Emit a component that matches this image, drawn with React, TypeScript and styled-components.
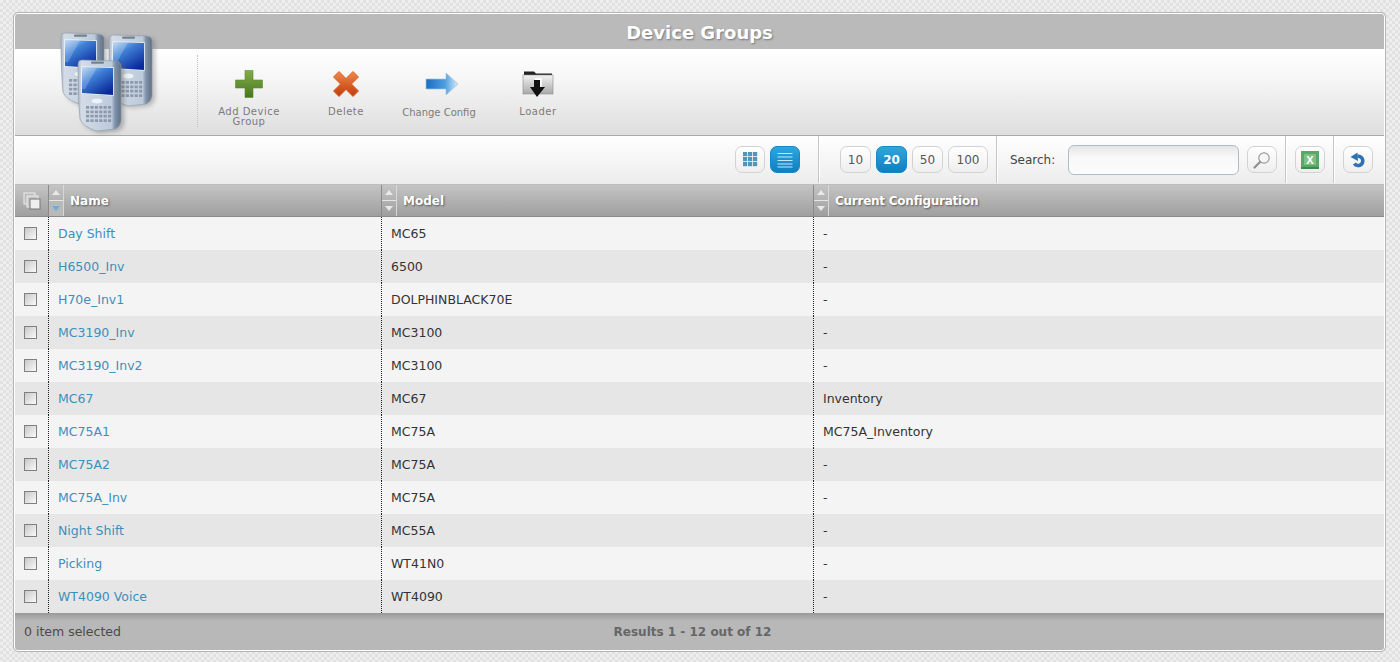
import React from 'react';
import styled, { createGlobalStyle } from 'styled-components';

const GlobalStyle = createGlobalStyle`
  html, body { margin: 0; padding: 0; height: 100%; }
  body {
    font-family: "DejaVu Sans", Verdana, sans-serif;
    background-color: #e9e9e9;
    background-image: conic-gradient(#e1e1e1 25%, #eeeeee 0 50%, #e1e1e1 0 75%, #eeeeee 0);
    background-size: 6px 6px;
    overflow: hidden;
  }
`;

const rows = [
  { name: 'Day Shift', model: 'MC65', config: '-' },
  { name: 'H6500_Inv', model: '6500', config: '-' },
  { name: 'H70e_Inv1', model: 'DOLPHINBLACK70E', config: '-' },
  { name: 'MC3190_Inv', model: 'MC3100', config: '-' },
  { name: 'MC3190_Inv2', model: 'MC3100', config: '-' },
  { name: 'MC67', model: 'MC67', config: 'Inventory' },
  { name: 'MC75A1', model: 'MC75A', config: 'MC75A_Inventory' },
  { name: 'MC75A2', model: 'MC75A', config: '-' },
  { name: 'MC75A_Inv', model: 'MC75A', config: '-' },
  { name: 'Night Shift', model: 'MC55A', config: '-' },
  { name: 'Picking', model: 'WT41N0', config: '-' },
  { name: 'WT4090 Voice', model: 'WT4090', config: '-' },
];

const PhoneIcon = ({ id }: { id: string }) => (
  <svg width="54" height="74" viewBox="0 0 54 74">
    <defs>
      <linearGradient id={`${id}-body`} x1="0" x2="1" y1="0" y2="0">
        <stop offset="0" stopColor="#a9b5c3" />
        <stop offset="0.08" stopColor="#d3dce6" />
        <stop offset="0.78" stopColor="#bccadb" />
        <stop offset="0.86" stopColor="#7f92a8" />
        <stop offset="1" stopColor="#5f7185" />
      </linearGradient>
      <linearGradient id={`${id}-screen`} x1="0" x2="0.7" y1="0" y2="1">
        <stop offset="0" stopColor="#b4d4f0" />
        <stop offset="0.4" stopColor="#3f80d6" />
        <stop offset="1" stopColor="#0b2a9a" />
      </linearGradient>
    </defs>
    <path d="M1 5 Q1 1 5 1 L37 2 Q43 2 44 6 L44 62 Q43 68 38 70 L20 72 Q6 68 3 60 Q1 40 1 5Z" fill={`url(#${id}-body)`} stroke="#8d9bab" strokeWidth="0.6" />
    <rect x="14" y="2.5" width="13" height="2.2" rx="1" fill="#76818e" />
    <path d="M5 8 L36 9 L36 36 L5 34Z" fill="#eef3f8" stroke="#eef3f8" strokeWidth="1.4" />
    <path d="M5 8 L36 9 L36 36 L5 34Z" fill={`url(#${id}-screen)`} />
    <path d="M5 8 L20 8.5 L8 30 L5 30Z" fill="#fff" opacity="0.2" />
    <ellipse cx="20" cy="42" rx="5.5" ry="2.4" fill="#eef2f7" />
    <g fill="#8b9aac">
      {Array.from({ length: 24 }).map((_, i) => (
        <rect key={i} x={9 + (i % 6) * 4.4} y={47 + Math.floor(i / 6) * 4.4} width="3.2" height="2.8" rx="0.5" />
      ))}
    </g>
  </svg>
);

const PlusIcon = () => (
  <svg width="30" height="30" viewBox="0 0 30 30">
    <defs>
      <linearGradient id="plus-fill" x1="0" x2="0" y1="0" y2="1">
        <stop offset="0" stopColor="#83ad4a" />
        <stop offset="1" stopColor="#47761f" />
      </linearGradient>
    </defs>
    <path d="M11 1.5 H19 V11 H28.5 V19 H19 V28.5 H11 V19 H1.5 V11 H11Z" fill="url(#plus-fill)" stroke="#5d8a30" strokeWidth="0.6" />
  </svg>
);

const CrossIcon = () => (
  <svg width="28" height="28" viewBox="0 0 28 28">
    <defs>
      <linearGradient id="cross-fill" x1="0" x2="0" y1="0" y2="1">
        <stop offset="0" stopColor="#ef8a4a" />
        <stop offset="1" stopColor="#bf3a0a" />
      </linearGradient>
    </defs>
    <path d="M7 1.5 L14 8.5 L21 1.5 L26.5 7 L19.5 14 L26.5 21 L21 26.5 L14 19.5 L7 26.5 L1.5 21 L8.5 14 L1.5 7Z" fill="url(#cross-fill)" strokeLinejoin="round" stroke="#d8622a" strokeWidth="1" />
  </svg>
);

const ArrowIcon = () => (
  <svg width="34" height="24" viewBox="0 0 34 24">
    <defs>
      <linearGradient id="arrow-fill" x1="0" x2="1" y1="0" y2="0">
        <stop offset="0" stopColor="#1a6cc0" />
        <stop offset="0.6" stopColor="#4f9fe0" />
        <stop offset="1" stopColor="#d8ecfa" />
      </linearGradient>
    </defs>
    <path d="M1 7 H21 V1 L33 12 L21 23 V17 H1Z" fill="url(#arrow-fill)" stroke="#9ac6e8" strokeWidth="0.7" />
  </svg>
);

const LoaderIcon = () => (
  <svg width="32" height="28" viewBox="0 0 32 28">
    <defs>
      <linearGradient id="folder-fill" x1="0" x2="0" y1="0" y2="1">
        <stop offset="0" stopColor="#f2f2f2" />
        <stop offset="1" stopColor="#a9a9a9" />
      </linearGradient>
    </defs>
    <path d="M2 1.5 H12 L14 3.5 H30 V6 H2Z" fill="#222" />
    <rect x="1" y="5" width="30" height="19" fill="url(#folder-fill)" stroke="#8c8c8c" strokeWidth="0.6" />
    <rect x="13" y="8" width="7" height="9" fill="#fff" opacity="0.85" />
    <path d="M12 10 H18 V17 H23 L15 27 L8 17 H12Z" fill="#111" />
  </svg>
);

const GridIcon = () => (
  <svg width="15" height="15" viewBox="0 0 15 15" fill="#4f97b8">
    {Array.from({ length: 9 }).map((_, i) => (
      <rect key={i} x={(i % 3) * 5} y={Math.floor(i / 3) * 5} width="4.2" height="4.2" />
    ))}
  </svg>
);

const ListIcon = () => (
  <svg width="16" height="16" viewBox="0 0 16 16" stroke="#bfeaf8" strokeWidth="1">
    {[1.5, 5, 8.5, 12, 15].map((y) => (
      <line key={y} x1="0.5" x2="15.5" y1={y} y2={y} />
    ))}
  </svg>
);

const SearchIcon = () => (
  <svg width="18" height="18" viewBox="0 0 18 18" fill="none">
    <circle cx="11" cy="7" r="5.2" fill="#f4f7fa" stroke="#9a9a9a" strokeWidth="1.2" />
    <path d="M7 11 L1.5 16.5" stroke="#8f8f8f" strokeWidth="2.2" strokeLinecap="round" />
  </svg>
);

const ExcelIcon = () => (
  <svg width="20" height="20" viewBox="0 0 20 20">
    <rect x="1" y="1" width="18" height="18" fill="#5aa868" />
    <rect x="1" y="17" width="18" height="2" fill="#3f8a4d" />
    <rect x="4" y="4" width="12" height="11" fill="#7ebf88" />
    <text x="10" y="13.5" textAnchor="middle" fontSize="11" fontWeight="700" fill="#fff" fontFamily="Liberation Sans, sans-serif">X</text>
  </svg>
);

const RefreshIcon = () => (
  <svg width="16" height="16" viewBox="0 0 16 16" fill="none">
    <path d="M7.5 4.4 A4.6 4.6 0 1 1 4.4 11.5" stroke="#2f72b4" strokeWidth="3.6" />
    <path d="M0.5 5 L7.5 0.5 L8 9Z" fill="#2f72b4" />
  </svg>
);

const SortButtons = ({ active }: { active?: boolean }) => (
  <SortStack>
    <SortCell>
      <svg width="8" height="5" viewBox="0 0 8 5"><path d="M0 5 L4 0 L8 5Z" fill="#e8e8e8" /></svg>
    </SortCell>
    <SortCell $active={active}>
      <svg width="8" height="5" viewBox="0 0 8 5"><path d="M0 0 L4 5 L8 0Z" fill={active ? '#63b4dc' : '#e8e8e8'} /></svg>
    </SortCell>
  </SortStack>
);

export default function App() {
  return (
    <>
      <GlobalStyle />
      <Panel>
        <TitleBar>Device Groups</TitleBar>
        <Logo>
          <BackPhoneLeft><PhoneIcon id="p1" /></BackPhoneLeft>
          <BackPhoneRight><PhoneIcon id="p2" /></BackPhoneRight>
          <FrontPhone><PhoneIcon id="p3" /></FrontPhone>
        </Logo>
        <ActionBar>
          <LogoCell />
          <Action $width={102}>
            <ActionIcon><PlusIcon /></ActionIcon>
            <ActionLabel>Add Device<br />Group</ActionLabel>
          </Action>
          <Action $width={92}>
            <ActionIcon><CrossIcon /></ActionIcon>
            <ActionLabel>Delete</ActionLabel>
          </Action>
          <Action $width={94}>
            <ActionIcon $shift={6}><ArrowIcon /></ActionIcon>
            <ActionLabel $tight>Change Config</ActionLabel>
          </Action>
          <Action $width={104}>
            <ActionIcon><LoaderIcon /></ActionIcon>
            <ActionLabel>Loader</ActionLabel>
          </Action>
        </ActionBar>
        <ViewBar>
          <BtnGroup>
            <SquareBtn><GridIcon /></SquareBtn>
            <SquareBtn $active><ListIcon /></SquareBtn>
          </BtnGroup>
          <BarSep $left={18} $right={21} />
          <BtnGroup>
            <PageBtn>10</PageBtn>
            <PageBtn $active>20</PageBtn>
            <PageBtn>50</PageBtn>
            <PageBtn $wide>100</PageBtn>
          </BtnGroup>
          <BarSep $left={8} $right={13} />
          <SearchLabel>Search:</SearchLabel>
          <SearchInput aria-label="Search" />
          <SquareBtn $ml={8}><SearchIcon /></SquareBtn>
          <BarSep $left={8} $right={9} />
          <SquareBtn><ExcelIcon /></SquareBtn>
          <BarSep $left={8} $right={9} />
          <SquareBtn><RefreshIcon /></SquareBtn>
        </ViewBar>
        <HeaderRow>
          <HeadCheck>
            <svg width="18" height="18" viewBox="0 0 18 18">
              <rect x="1" y="1" width="11" height="11" fill="#bbb" stroke="#eee" />
              <rect x="4" y="4" width="11" height="11" fill="#c6c6c6" stroke="#eee" />
              <rect x="7" y="7" width="10" height="10" fill="#efefef" stroke="#777" />
            </svg>
          </HeadCheck>
          <HeadCell><SortButtons active /><HeadText>Name</HeadText></HeadCell>
          <HeadCell><SortButtons /><HeadText>Model</HeadText></HeadCell>
          <HeadCell><SortButtons /><HeadText $tight>Current Configuration</HeadText></HeadCell>
        </HeaderRow>
        <div>
          {rows.map((row, i) => (
            <Row key={row.name} $alt={i % 2 === 1}>
              <CheckCell><CheckBox /></CheckCell>
              <Cell><NameLink>{row.name}</NameLink></Cell>
              <Cell>{row.model}</Cell>
              <Cell>{row.config}</Cell>
            </Row>
          ))}
        </div>
        <Footer>
          <span>0 item selected</span>
          <Results>Results 1 - 12 out of 12</Results>
          <span />
        </Footer>
      </Panel>
    </>
  );
}

const COLUMNS = '33px 333px 432px 1fr';

const Panel = styled.div`
  position: relative;
  box-sizing: border-box;
  width: 1371px;
  height: 638px;
  margin: 13px 0 0 14px;
  border: 1px solid #fff;
  border-radius: 4px;
  box-shadow: 0 0 0 1px #b5b5b5;
  background: #f3f3f3;
  overflow: hidden;
`;

const TitleBar = styled.div`
  height: 35px;
  line-height: 37px;
  background: #bababa;
  color: #fff;
  font-size: 18px;
  font-weight: 700;
  text-align: center;
  text-shadow: 1px 1px 2px #777;
`;

const Logo = styled.div`
  position: absolute;
  left: 44px;
  top: 17px;
  width: 110px;
  height: 100px;
`;

const BackPhoneLeft = styled.div`
  position: absolute;
  left: 1px;
  top: 1px;
  filter: drop-shadow(3px 2px 2px rgba(90, 90, 90, 0.35));
`;

const BackPhoneRight = styled.div`
  position: absolute;
  left: 49px;
  top: 3px;
  filter: drop-shadow(3px 2px 2px rgba(90, 90, 90, 0.35));
`;

const FrontPhone = styled.div`
  position: absolute;
  left: 18px;
  top: 28px;
  filter: drop-shadow(3px 2px 2px rgba(90, 90, 90, 0.4));
`;

const ActionBar = styled.div`
  display: flex;
  box-sizing: border-box;
  height: 87px;
  border-bottom: 1px solid #a9a9a9;
  background: linear-gradient(#ffffff, #f6f6f6 35%, #dedede);
`;

const LogoCell = styled.div`
  width: 182px;
  height: 72px;
  margin-top: 6px;
  border-right: 1px dotted #c4c4c4;
`;

const Action = styled.div<{ $width: number }>`
  display: flex;
  flex-direction: column;
  align-items: center;
  width: ${({ $width }) => $width}px;
  padding-top: 19px;
`;

const ActionIcon = styled.div<{ $shift?: number }>`
  display: flex;
  align-items: center;
  justify-content: center;
  height: 32px;
  margin-left: ${({ $shift }) => $shift ?? 0}px;
`;

const ActionLabel = styled.div<{ $tight?: boolean }>`
  margin-top: ${({ $tight }) => ($tight ? 8 : 7)}px;
  color: #7b7b7b;
  font-size: 10px;
  line-height: 10px;
  letter-spacing: ${({ $tight }) => ($tight ? 0 : 0.5)}px;
  text-align: center;
`;

const ViewBar = styled.div`
  display: flex;
  align-items: center;
  justify-content: flex-end;
  box-sizing: border-box;
  height: 49px;
  padding: 0 11px 1px 0;
  border-bottom: 1px solid #bdbdbd;
  background: linear-gradient(#ffffff, #ececec);
`;

const BtnGroup = styled.div`
  display: flex;
  gap: 5px;
`;

const BarSep = styled.div<{ $left: number; $right: number }>`
  align-self: stretch;
  width: 1px;
  margin: 0 ${({ $right }) => $right}px 0 ${({ $left }) => $left}px;
  background: #c6c6c6;
  box-shadow: 1px 0 0 #fff;
`;

const btnBase = `
  display: flex;
  align-items: center;
  justify-content: center;
  box-sizing: border-box;
  height: 27px;
  border-radius: 7px;
  font-family: inherit;
`;

const SquareBtn = styled.div<{ $active?: boolean; $ml?: number }>`
  ${btnBase}
  width: 30px;
  margin-left: ${({ $ml }) => $ml ?? 0}px;
  border: 1px solid ${({ $active }) => ($active ? '#1a87c0' : '#d2d2d2')};
  background: ${({ $active }) =>
    $active ? 'linear-gradient(#2fa6dc, #0f7fc0)' : 'linear-gradient(#ffffff, #eeeeee)'};
`;

const PageBtn = styled.div<{ $active?: boolean; $wide?: boolean }>`
  ${btnBase}
  width: ${({ $wide }) => ($wide ? 40 : 31)}px;
  border: 1px solid ${({ $active }) => ($active ? '#1a87c0' : '#d2d2d2')};
  background: ${({ $active }) =>
    $active ? 'linear-gradient(#2fa6dc, #0f7fc0)' : 'linear-gradient(#ffffff, #eeeeee)'};
  color: ${({ $active }) => ($active ? '#fff' : '#555')};
  font-size: 12px;
  font-weight: ${({ $active }) => ($active ? 700 : 400)};
`;

const SearchLabel = styled.span`
  width: 58px;
  color: #444;
  font-size: 12px;
`;

const SearchInput = styled.input`
  box-sizing: border-box;
  width: 171px;
  height: 30px;
  padding: 0 6px;
  border: 1px solid #a9c0cc;
  border-radius: 6px;
  background: linear-gradient(#e6e6e6, #f8f8f8 40%, #fcfcfc);
  outline: none;
`;

const HeaderRow = styled.div`
  display: grid;
  grid-template-columns: ${COLUMNS};
  box-sizing: border-box;
  height: 32px;
  border-bottom: 1px solid #8a8a8a;
  background: linear-gradient(#c4c4c4, #9f9f9f);
`;

const HeadCheck = styled.div`
  display: flex;
  align-items: center;
  justify-content: center;
`;

const HeadCell = styled.div`
  display: flex;
  align-items: stretch;
  border-left: 1px solid #8a8a8a;
`;

const SortStack = styled.div`
  display: flex;
  flex-direction: column;
  width: 14px;
  border-right: 1px solid #d8d8d8;
`;

const SortCell = styled.div<{ $active?: boolean }>`
  flex: 1;
  display: flex;
  align-items: center;
  justify-content: center;
  background: ${({ $active }) => ($active ? '#b9b9b9' : 'transparent')};
  &:first-child { border-bottom: 1px solid #e6e6e6; }
`;

const HeadText = styled.span<{ $tight?: boolean }>`
  align-self: center;
  margin-left: 6px;
  color: #fff;
  font-size: 12px;
  font-weight: 700;
  letter-spacing: ${({ $tight }) => ($tight ? -0.25 : 0)}px;
  text-shadow: 1px 1px 2px #555;
`;

const Row = styled.div<{ $alt: boolean }>`
  display: grid;
  grid-template-columns: ${COLUMNS};
  height: 33px;
  background: ${({ $alt }) => ($alt ? '#e6e6e6' : '#f4f4f4')};
`;

const CheckCell = styled.div`
  display: flex;
  align-items: center;
  justify-content: center;
  padding-right: 2px;
`;

const CheckBox = styled.div`
  box-sizing: border-box;
  width: 13px;
  height: 13px;
  border: 1px solid #808080;
  background: linear-gradient(135deg, #c8c8c8, #fafafa);
`;

const Cell = styled.div`
  display: flex;
  align-items: center;
  padding-left: 9px;
  border-left: 1px dotted #222;
  color: #333;
  font-size: 12.5px;
`;

const NameLink = styled.a`
  color: #3d8fbb;
`;

const Footer = styled.div`
  display: grid;
  grid-template-columns: 1fr auto 1fr;
  align-items: center;
  height: 37px;
  padding: 0 23px 0 9px;
  background: linear-gradient(#999999, #b8b8b8 8px);
  color: #4a4a4a;
  font-size: 12.5px;
`;

const Results = styled.span`
  color: #666;
  font-size: 12px;
  font-weight: 700;
`;
